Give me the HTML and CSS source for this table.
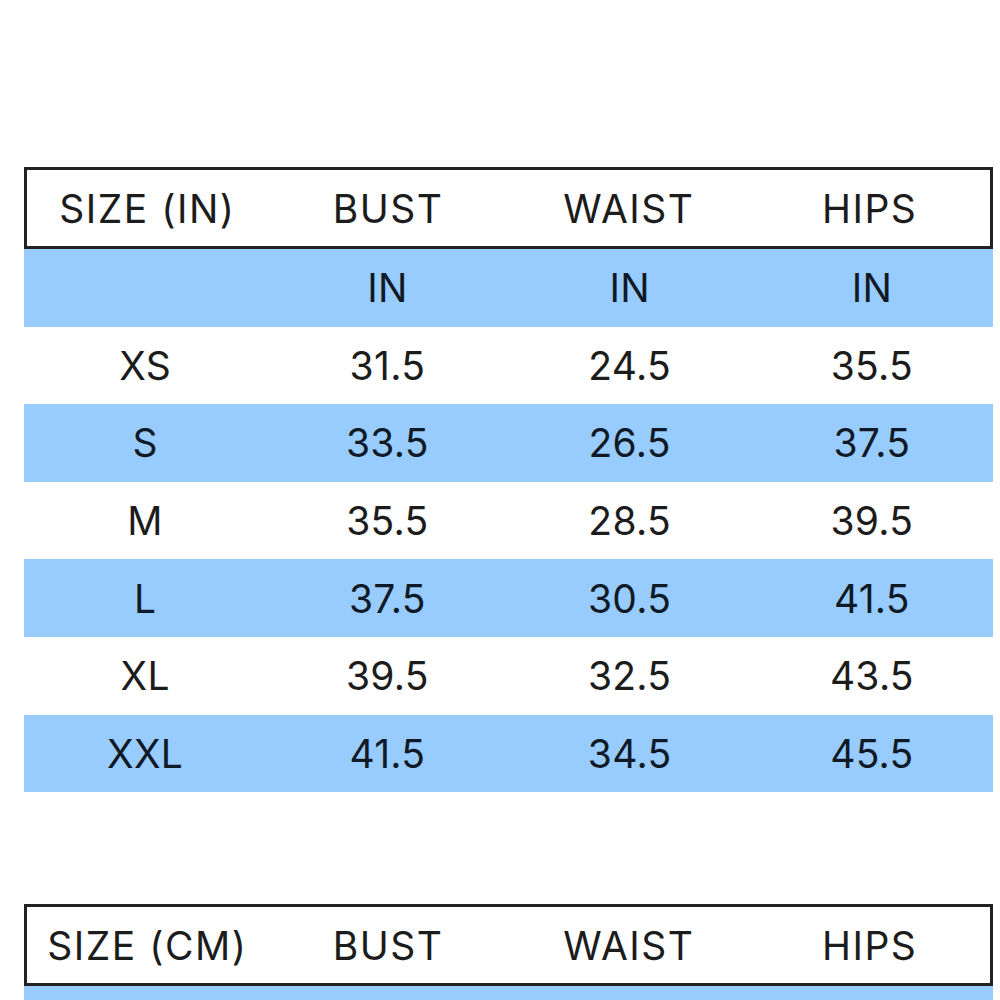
FILE: index.html
```html
<!DOCTYPE html>
<html>
<head>
<meta charset="utf-8">
<link rel="stylesheet" href="styles.css">
</head>
<body>
<main class="page">
  <section class="chart">
    <div class="row head"><div>SIZE (IN)</div><div>BUST</div><div>WAIST</div><div>HIPS</div></div>
    <div class="row blue"><div></div><div>IN</div><div>IN</div><div>IN</div></div>
    <div class="row"><div>XS</div><div>31.5</div><div>24.5</div><div>35.5</div></div>
    <div class="row blue"><div>S</div><div>33.5</div><div>26.5</div><div>37.5</div></div>
    <div class="row"><div>M</div><div>35.5</div><div>28.5</div><div>39.5</div></div>
    <div class="row blue"><div>L</div><div>37.5</div><div>30.5</div><div>41.5</div></div>
    <div class="row"><div>XL</div><div>39.5</div><div>32.5</div><div>43.5</div></div>
    <div class="row blue"><div>XXL</div><div>41.5</div><div>34.5</div><div>45.5</div></div>
  </section>
  <section class="chart">
    <div class="row head"><div>SIZE (CM)</div><div>BUST</div><div>WAIST</div><div>HIPS</div></div>
    <div class="row blue short"></div>
  </section>
</main>
</body>
</html>
```
FILE: styles.css
```css
html, body {
  margin: 0;
  padding: 0;
  background: #ffffff;
}
body {
  font-family: "Inter", "Liberation Sans", sans-serif;
  color: #1c1c1c;
  overflow: hidden;
  height: 1000px;
}
.page {
  padding: 167px 0 0 24px;
  display: flex;
  flex-direction: column;
  gap: 112px;
}
.chart {
  width: 969px;
  display: flex;
  flex-direction: column;
}
.row {
  display: grid;
  grid-template-columns: repeat(4, 1fr);
  height: 77.6px;
  align-items: center;
  text-align: center;
  font-size: 39px;
  font-weight: 400;
  letter-spacing: 0.3px;
}
.row.head {
  height: 82px;
  box-sizing: border-box;
  border: 3px solid #222222;
  letter-spacing: 1.5px;
}
.row.blue {
  background: #99ccfe;
  color: #0f1a26;
}
.row.short {
  height: 20px;
}
```
